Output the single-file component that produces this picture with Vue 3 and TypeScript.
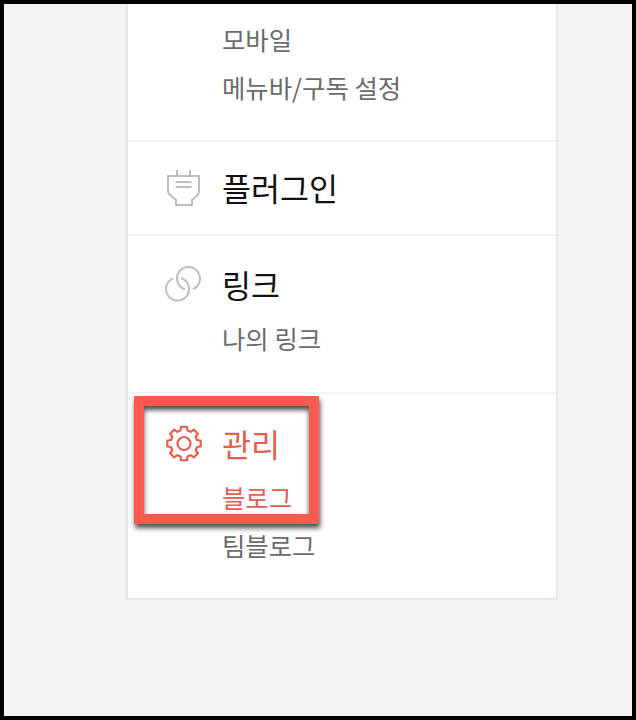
<script setup lang="ts">
interface Section {
  title?: string
  icon?: 'plug' | 'link' | 'gear'
  active?: boolean
  subs: { label: string; active?: boolean }[]
  cls: string
}
const sections: Section[] = [
  { cls: 's-top', subs: [{ label: '모바일' }, { label: '메뉴바/구독 설정' }] },
  { cls: 's-plug', title: '플러그인', icon: 'plug', subs: [] },
  { cls: 's-link', title: '링크', icon: 'link', subs: [{ label: '나의 링크' }] },
  {
    cls: 's-admin',
    title: '관리',
    icon: 'gear',
    active: true,
    subs: [{ label: '블로그', active: true }, { label: '팀블로그' }],
  },
]

function gearPath(cx: number, cy: number, inner: number, outer: number): string {
  const pt = (r: number, deg: number) => {
    const a = (deg * Math.PI) / 180
    return `${(cx + r * Math.cos(a)).toFixed(2)} ${(cy + r * Math.sin(a)).toFixed(2)}`
  }
  const parts: string[] = []
  for (let i = 0; i < 8; i++) {
    const a = -90 + i * 45
    parts.push(pt(inner, a - 15), pt(outer, a - 10), pt(outer, a + 10), pt(inner, a + 15))
  }
  return `M${parts.join('L')}Z`
}
const gear = gearPath(20, 19.500, 13.500, 17)
</script>

<template>
  <div class="frame">
    <div class="card">
      <section v-for="s in sections" :key="s.cls" class="section" :class="s.cls">
        <div v-if="s.title" class="head" :class="{ active: s.active }">
          <span class="icon">
            <svg v-if="s.icon === 'plug'" width="38" height="38" viewBox="0 0 38 38" fill="none" stroke="#bdbdbd" stroke-width="2">
              <path d="M13 2v6M26 2v6" />
              <path d="M4 8h31v15c0 2-1 4-3 5.500L28 32v5H12v-5l-4-3.500C5.500 27 4 25 4 23z" />
              <path d="M11.500 14h16M11.500 19h16" />
            </svg>
            <svg v-else-if="s.icon === 'link'" width="38" height="38" viewBox="0 0 38 38" fill="none" stroke="#bdbdbd" stroke-width="2">
              <path d="M17.050 13.060A11.500 11.500 0 1 1 9.200 13.340" />
              <path d="M20.950 24.440A11.500 11.500 0 1 1 28.800 24.160" />
            </svg>
            <svg v-else width="38" height="38" viewBox="0 0 38 38" fill="none" stroke="#e2604f" stroke-width="2.200" stroke-linejoin="round">
              <circle cx="20" cy="19.500" r="6.500" />
              <path :d="gear" />
            </svg>
          </span>
          <span class="title">{{ s.title }}</span>
        </div>
        <ul v-if="s.subs.length" class="subs">
          <li v-for="sub in s.subs" :key="sub.label" :class="{ on: sub.active }">{{ sub.label }}</li>
        </ul>
      </section>
      <div class="callout"></div>
    </div>
  </div>
</template>

<style>
body {
  margin: 0;
}
</style>

<style scoped>
.frame {
  box-sizing: border-box;
  width: 636px;
  height: 720px;
  border: 4px solid #000;
  background: #f3f4f6;
  overflow: hidden;
  font-family: "Noto Sans CJK KR", "Noto Sans", sans-serif;
}
.card {
  position: relative;
  box-sizing: border-box;
  width: 432px;
  height: 596px;
  margin-left: 122px;
  background: #fff;
  border: solid #e4e7ee;
  border-width: 0 2px 2px 2px;
}
.section {
  box-sizing: border-box;
  border-bottom: 2px solid #f1f2f5;
  padding-left: 94px;
}
.section:last-of-type {
  border-bottom: 0;
}
.s-top {
  height: 138px;
  padding-top: 11px;
}
.s-plug {
  height: 94px;
  padding-top: 21px;
}
.s-link {
  height: 158px;
  padding-top: 24px;
}
.s-admin {
  padding-top: 25px;
}
.head {
  position: relative;
  display: flex;
  align-items: center;
  height: 48px;
}
.icon {
  position: absolute;
  left: -58px;
  top: 5px;
  display: flex;
  width: 38px;
  height: 38px;
  justify-content: center;
}
.title {
  font-size: 31.5px;
  line-height: 48px;
  color: #111;
}
.head.active .title {
  color: #e2604f;
}
.subs {
  list-style: none;
  margin: 0;
  padding: 0;
}
.head + .subs {
  margin-top: 6px;
}
.subs li {
  font-size: 25.4px;
  line-height: 48px;
  color: #6b6b6b;
}
.subs li.on {
  color: #e2604f;
}
.callout {
  position: absolute;
  left: 6px;
  top: 392px;
  box-sizing: border-box;
  width: 185px;
  height: 128px;
  border: 10px solid #fc5a4e;
  box-shadow: 1px 4px 5px rgba(0, 0, 0, 0.7), inset 0 4px 5px rgba(0, 0, 0, 0.7);
  pointer-events: none;
}
</style>
